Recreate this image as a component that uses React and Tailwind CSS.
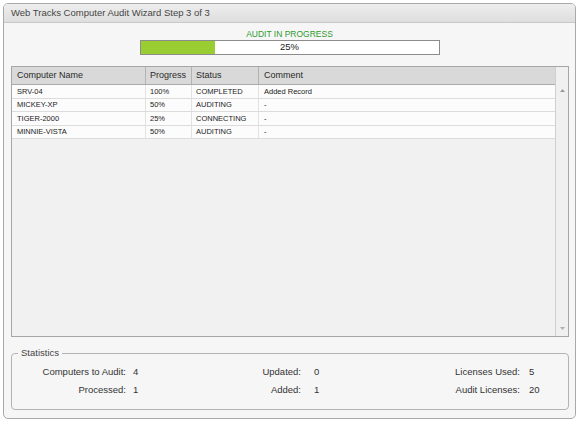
import React from 'react'

const rows = [
    { name: 'SRV-04', progress: '100%', status: 'COMPLETED', comment: 'Added Record' },
    { name: 'MICKEY-XP', progress: '50%', status: 'AUDITING', comment: '-' },
    { name: 'TIGER-2000', progress: '25%', status: 'CONNECTING', comment: '-' },
    { name: 'MINNIE-VISTA', progress: '50%', status: 'AUDITING', comment: '-' },
]

function Stat({ label, value, labelW, valueW, gap }) {
    return (
        <div className="flex items-center">
            <span className={`text-right ${labelW}`}>{label}</span>
            <span className={`${gap} ${valueW}`}>{value}</span>
        </div>
    )
}

export default function App() {
    return (
        <div className="w-[579px] h-[422px] bg-white pt-[3px] pl-[3px]" style={{ fontFamily: '"Liberation Sans", Arial, sans-serif' }}>
            <div className="w-[573px] h-[416px] border border-[#a9a9a9] rounded-[5px] bg-[#f6f6f6] flex flex-col overflow-hidden">
                {/* Title bar */}
                <div className="h-[19px] shrink-0 border-b border-[#c9c9c9] bg-gradient-to-b from-[#eeeeee] to-[#dedede] pl-[7px] flex items-center text-[9.5px] text-[#454545]">
                    Web Tracks Computer Audit Wizard Step 3 of 3
                </div>

                {/* Overall progress */}
                <div className="flex flex-col items-center mt-[6px]">
                    <span className="text-[8.5px] leading-[11px] text-[#2e9a2e]">AUDIT IN PROGRESS</span>
                    <div className="relative w-[300px] h-[15px] border border-[#8c8c8c] bg-white flex">
                        <div className="w-[25%] h-full bg-[#9acd32]"></div>
                        <span className="absolute inset-0 flex items-center justify-center text-[9.5px] text-[#222]">25%</span>
                    </div>
                </div>

                {/* Computer grid */}
                <div className="mt-[11px] ml-[7px] w-[558px] h-[271px] shrink-0 border border-[#a6a6a6] flex bg-[#f1f1f1]">
                    <div className="flex-1 flex flex-col border-r border-[#cfcfcf]">
                        <div className="h-[18px] flex bg-[#d9d9d9] border-b border-[#aaaaaa] text-[9px] text-[#2a2a2a]">
                            <div className="w-[134px] border-r border-[#b3b3b3] pl-[5px] flex items-center">Computer Name</div>
                            <div className="w-[46px] border-r border-[#b3b3b3] pl-[4px] flex items-center">Progress</div>
                            <div className="w-[67px] border-r border-[#b3b3b3] pl-[4px] flex items-center">Status</div>
                            <div className="flex-1 pl-[5px] flex items-center">Comment</div>
                        </div>
                        {rows.map(r => (
                            <div key={r.name} className="h-[13.5px] flex bg-[#fcfcfc] border-b border-[#dcdcdc] text-[7.5px] text-[#222]">
                                <div className="w-[134px] border-r border-[#e2e2e2] pl-[5px] flex items-center">{r.name}</div>
                                <div className="w-[46px] border-r border-[#e2e2e2] pl-[4px] flex items-center">{r.progress}</div>
                                <div className="w-[67px] border-r border-[#e2e2e2] pl-[4px] flex items-center">{r.status}</div>
                                <div className="flex-1 pl-[5px] flex items-center">{r.comment}</div>
                            </div>
                        ))}
                    </div>
                    {/* Scrollbar */}
                    <div className="w-[12px] flex flex-col items-center justify-between pt-[22px] pb-[6px] bg-[#f0f0f0]">
                        <svg width="5" height="3" viewBox="0 0 5 3"><path d="M2.5 0L5 3H0z" fill="#9a9a9a" /></svg>
                        <svg width="5" height="3" viewBox="0 0 5 3"><path d="M0 0H5L2.5 3z" fill="#b0b0b0" /></svg>
                    </div>
                </div>

                {/* Statistics */}
                <fieldset className="mt-[10px] ml-[7px] w-[558px] border border-[#b3b3b3] rounded-[4px] pt-[6px] pb-[12px] text-[9.5px] text-[#333]">
                    <legend className="ml-[6px] px-[3px] leading-[12px] text-[9.5px] text-[#444]">Statistics</legend>
                    <div className="flex flex-col gap-[4px] leading-[14px]">
                        <div className="flex">
                            <Stat label="Computers to Audit:" value="4" labelW="w-[114px]" valueW="w-[53px]" gap="ml-[7px]" />
                            <Stat label="Updated:" value="0" labelW="w-[115px]" valueW="w-[87px]" gap="ml-[13px]" />
                            <Stat label="Licenses Used:" value="5" labelW="w-[119px]" valueW="w-[30px]" gap="ml-[9px]" />
                        </div>
                        <div className="flex">
                            <Stat label="Processed:" value="1" labelW="w-[114px]" valueW="w-[53px]" gap="ml-[7px]" />
                            <Stat label="Added:" value="1" labelW="w-[115px]" valueW="w-[87px]" gap="ml-[13px]" />
                            <Stat label="Audit Licenses:" value="20" labelW="w-[119px]" valueW="w-[30px]" gap="ml-[9px]" />
                        </div>
                    </div>
                </fieldset>
            </div>
        </div>
    )
}
